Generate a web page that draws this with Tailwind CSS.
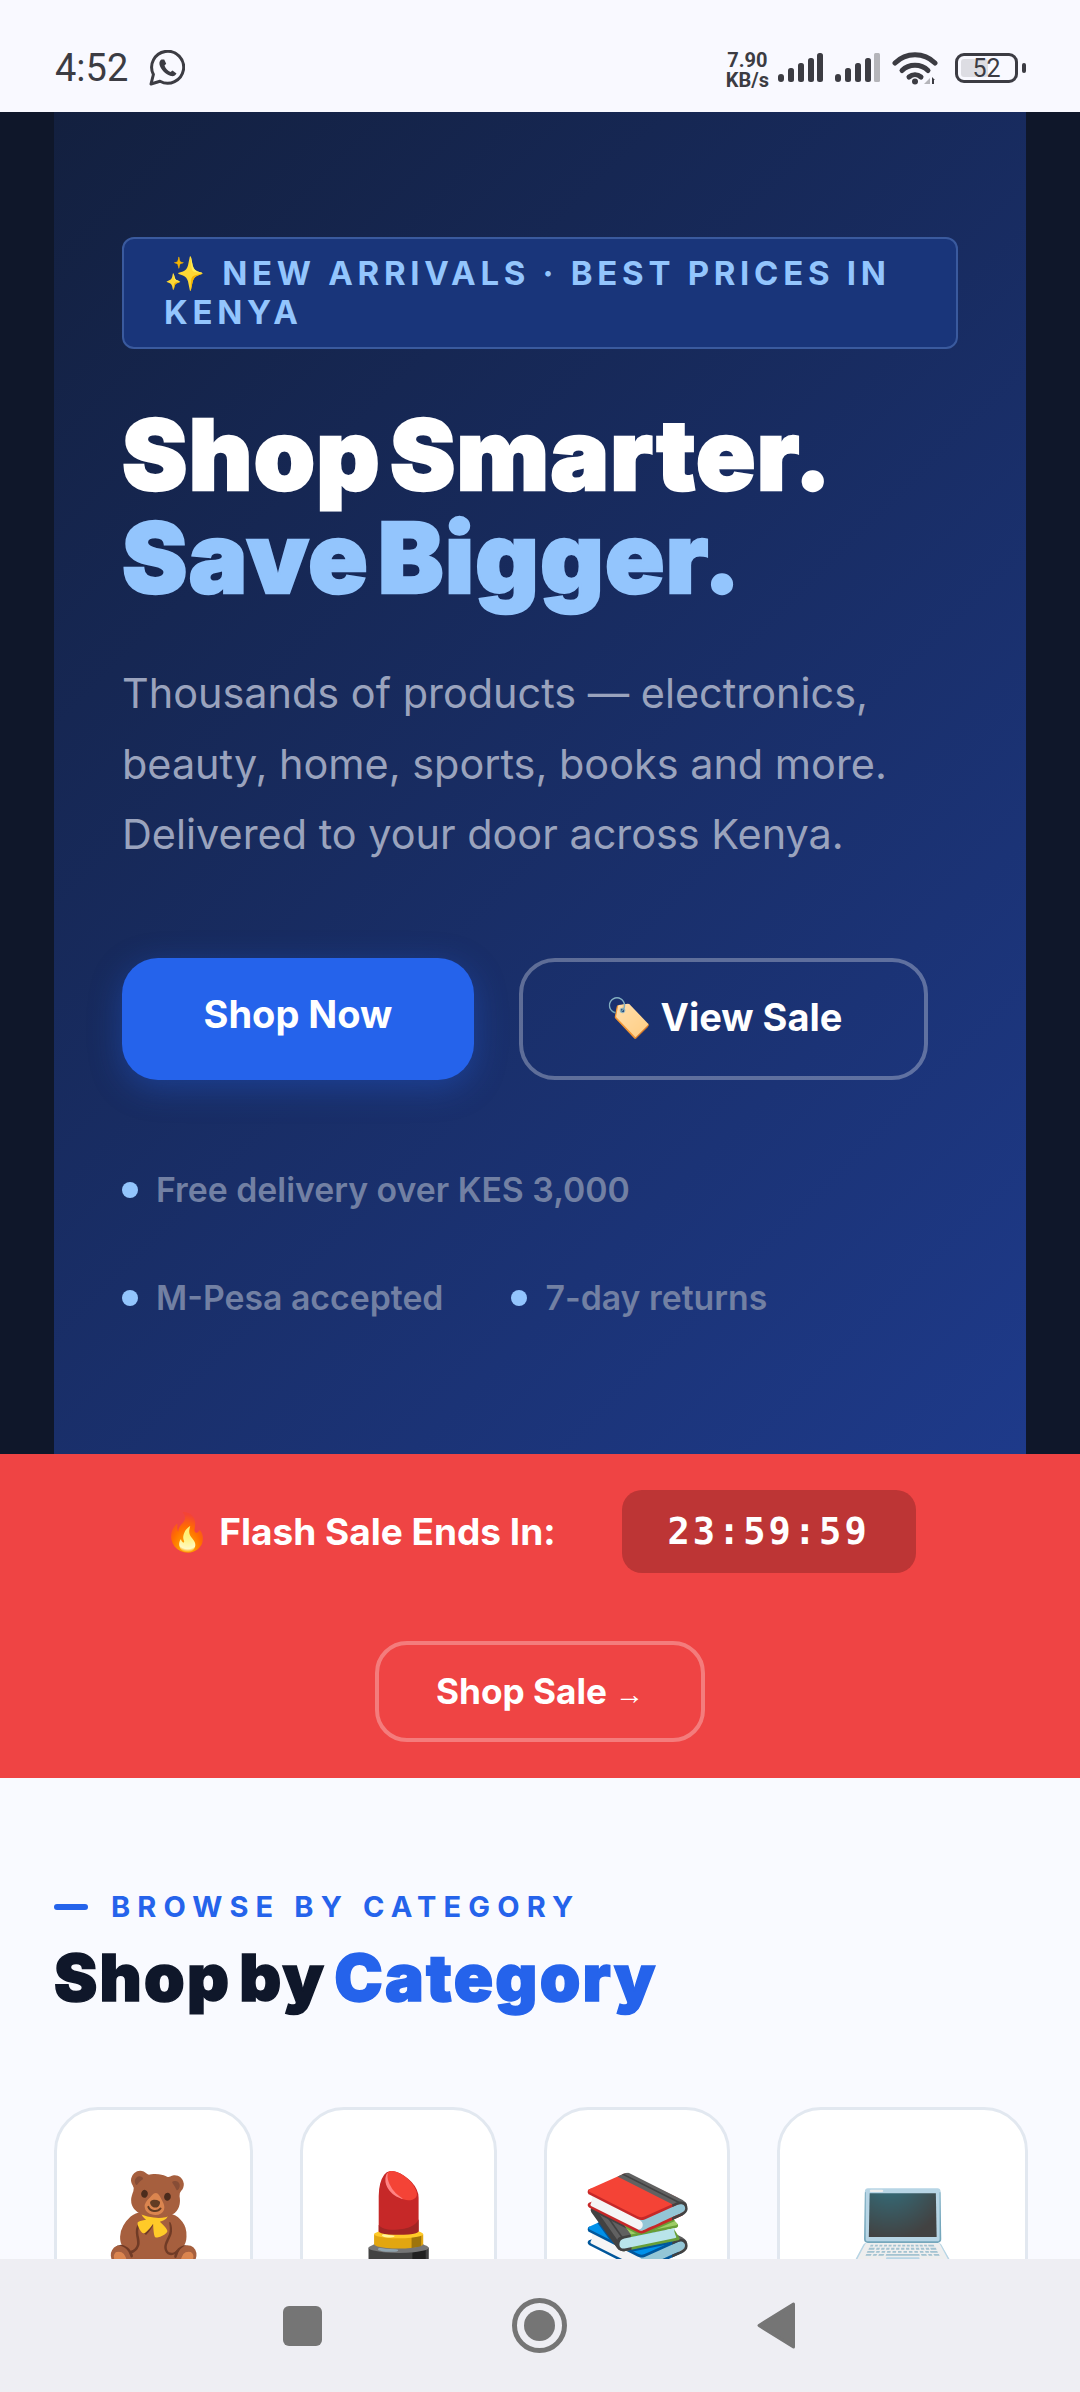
<!DOCTYPE html>
<html lang="en">
<head>
    <meta charset="UTF-8">
    <title>Shop Smarter</title>
    <script src="https://cdn.jsdelivr.net/npm/@tailwindcss/browser@4"></script>
</head>
<body class="h-[2392px] w-[1080px] overflow-hidden flex flex-col bg-[#f9faff] font-[Inter,sans-serif]">

<!-- status bar -->
<div class="h-[112px] shrink-0 bg-[#f9f9ff] flex items-center pl-[55px] pr-[54px] pt-[24px] text-[#3c3c43]">
    <span class="text-[38px] font-[450] leading-none font-[Roboto,sans-serif]">4:52</span>
    <svg class="ml-[21px] w-[36px] h-[36px]" viewBox="0 0 36 36" fill="none" stroke="#3c3c43">
        <path d="M2 34l2.400-9.500a16 16 0 1 1 6.600 6.800z" stroke-width="3" stroke-linejoin="round"/>
        <path d="M12.500 9.500c-1.500 1-2.500 2.500-2 5 1 4.500 6 10 11.500 11.500 2.500.6 4.500-.5 5.500-2.500l-4-3-2 1.500c-2.500-1-5-3.500-6-6.500l1.700-1.700-2-4.300z" fill="#3c3c43" stroke="none"/>
    </svg>
    <div class="ml-auto flex items-center">
        <div class="pt-[3px] text-[20px] font-bold leading-[20px] text-center font-[Roboto,sans-serif]">7.90<br>KB/s</div>
        <svg class="ml-[9px] w-[45px] h-[30px]" viewBox="0 0 45 30" fill="#3c3c43">
            <rect x="0" y="21" width="6" height="8" rx="3"/><rect x="10" y="15" width="6" height="14" rx="2.500"/><rect x="20" y="10" width="6" height="19" rx="2.500"/><rect x="30" y="5" width="6" height="24" rx="2.500"/><rect x="39" y="0" width="6" height="29" rx="2.500"/>
        </svg>
        <svg class="ml-[12px] w-[45px] h-[30px]" viewBox="0 0 45 30" fill="#3c3c43">
            <rect x="0" y="21" width="6" height="8" rx="3"/><rect x="10" y="15" width="6" height="14" rx="2.500"/><rect x="20" y="10" width="6" height="19" rx="2.500"/><rect x="30" y="5" width="6" height="24" rx="2.500"/><rect x="39" y="0" width="6" height="29" rx="1.500" fill="#b5b5ba"/>
        </svg>
        <svg class="ml-[12px] w-[46px] h-[34px]" viewBox="0 0 46 34" fill="none" stroke="#3c3c43" stroke-width="5" stroke-linecap="round">
            <path d="M3 12c11-11 29-11 40 0"/>
            <path d="M10 19.500c7-7 19-7 26 0"/>
            <path d="M17 26c3.500-3 8.500-3 12 0"/>
            <circle cx="23" cy="30.500" r="3" fill="#3c3c43" stroke="none"/>
            <path d="M32 33h6v-6z" fill="#b5b5ba" stroke="none"/>
            <path d="M40 33v-7l3 3h-1v4z" fill="#3c3c43" stroke="none"/>
        </svg>
        <div class="ml-[17px] relative w-[63px] h-[30px] border-[3px] border-[#3c3c43] rounded-[9px] flex items-center justify-center">
            <div class="absolute left-[3px] top-[3px] bottom-[3px] w-[27px] bg-[#dddde3] rounded-[3px]"></div>
            <span class="relative text-[25px] leading-none font-[Roboto,sans-serif]">52</span>
        </div>
        <div class="ml-[4px] w-[4px] h-[10px] bg-[#3c3c43] rounded-[2px]"></div>
    </div>
</div>

<main class="flex-1 min-h-0 overflow-hidden">
    <!-- hero -->
    <section class="bg-[#0f172a] px-[54px]">
        <div class="h-[1342px] bg-[linear-gradient(135deg,#13203f,#1e3a8a)] px-[68px] pt-[125px]">
            <div class="border-2 border-[#3a5a9e] bg-[#19357a] rounded-[12px] pl-[40px] pr-[30px] py-[15px] text-[33px] leading-[39px] font-bold tracking-[4.700px] text-[#93c5fd]">✨ NEW ARRIVALS · BEST PRICES IN KENYA</div>
            <h1 class="mt-[54px] text-[98px] leading-[103px] font-black tracking-[1.400px] [word-spacing:-12px] [-webkit-text-stroke:2.500px_currentColor] text-white">Shop Smarter.<br><span class="text-[#93c5fd]">Save Bigger.</span></h1>
            <p class="mt-[49px] text-[41.400px] leading-[70.500px] text-[#9aa3bd]">Thousands of products — electronics, beauty, home, sports, books and more. Delivered to your door across Kenya.</p>
            <div class="mt-[88px] flex gap-[45px]">
                <a class="w-[352px] h-[122px] pb-[8px] flex items-center justify-center rounded-[36px] bg-[#2563eb] text-[38px] font-bold text-white shadow-[0_8px_32px_rgba(37,99,235,0.35)]">Shop Now</a>
                <a class="w-[409px] h-[122px] pb-[2px] flex items-center justify-center rounded-[36px] border-4 border-white/30 text-[38px] font-bold text-white">🏷️ View Sale</a>
            </div>
            <div class="mt-[83px] flex flex-wrap gap-x-[68px] gap-y-[54px] text-[33.800px] leading-[54px] font-semibold text-[#7280a3]">
                <div class="flex items-center gap-[18px]"><span class="w-[16px] h-[16px] rounded-full bg-[#93c5fd]"></span>Free delivery over KES 3,000</div>
                <div class="flex items-center gap-[18px]"><span class="w-[16px] h-[16px] rounded-full bg-[#93c5fd]"></span>M-Pesa accepted</div>
                <div class="flex items-center gap-[18px]"><span class="w-[16px] h-[16px] rounded-full bg-[#93c5fd]"></span>7-day returns</div>
            </div>
        </div>
    </section>

    <!-- flash sale -->
    <section class="bg-[#ef4444] pt-[36px] pb-[36px] flex flex-col items-center text-white">
        <div class="flex items-center gap-[66px]">
            <span class="text-[37px] font-bold">🔥 Flash Sale Ends In:</span>
            <span class="w-[294px] h-[83px] flex items-center justify-center rounded-[20px] bg-[#bd3535] text-[37px] font-bold tracking-[3px] font-['DejaVu_Sans_Mono',monospace]">23:59:59</span>
        </div>
        <a class="mt-[68px] w-[330px] h-[101px] flex items-center justify-center gap-[8px] rounded-[32px] border-4 border-white/30 text-[35.200px] font-bold">Shop Sale <span class="text-[29px] font-normal font-['Liberation_Sans',sans-serif] pt-[6px]">→</span></a>
    </section>

    <!-- categories -->
    <section class="px-[54px] pt-[111px]">
        <div class="flex items-center gap-[23px] text-[29px] leading-[36px] font-bold tracking-[7.150px] text-[#2563eb]">
            <span class="w-[34px] h-[6px] rounded-full bg-[#2563eb]"></span>BROWSE BY CATEGORY
        </div>
        <h2 class="mt-[14px] text-[65px] leading-[78px] font-black tracking-[2.250px] [word-spacing:-7px] [-webkit-text-stroke:1.500px_currentColor] text-[#0f172a]">Shop by <span class="text-[#2563eb]">Category</span></h2>
        <div class="mt-[90px] flex gap-[47px]">
            <div class="w-[199px] h-[300px] shrink-0 pt-[41px] text-center text-[91px] bg-white border-[3px] border-[#e2e8f0] rounded-[44px]">🧸</div>
            <div class="w-[197px] h-[300px] shrink-0 pt-[41px] text-center text-[91px] bg-white border-[3px] border-[#e2e8f0] rounded-[44px]">💄</div>
            <div class="w-[186px] h-[300px] shrink-0 pt-[41px] text-center text-[91px] bg-white border-[3px] border-[#e2e8f0] rounded-[44px]">📚</div>
            <div class="w-[251px] h-[300px] shrink-0 pt-[41px] text-center text-[91px] bg-white border-[3px] border-[#e2e8f0] rounded-[44px]">💻</div>
        </div>
    </section>
</main>

<!-- nav bar -->
<div class="h-[133px] shrink-0 bg-[#eeeef3] flex items-center justify-center gap-[190px] pr-[3px]">
    <div class="w-[39px] h-[40px] rounded-[6px] bg-[#757575]"></div>
    <div class="w-[55px] h-[55px] rounded-full border-[5px] border-[#757575] flex items-center justify-center">
        <div class="w-[31px] h-[31px] rounded-full bg-[#757575]"></div>
    </div>
    <svg class="w-[38px] h-[47px]" viewBox="0 0 38 47" fill="#757575" stroke="#757575" stroke-width="3" stroke-linejoin="round"><path d="M36.500 2v43L2 23.500z"/></svg>
</div>

</body>
</html>
